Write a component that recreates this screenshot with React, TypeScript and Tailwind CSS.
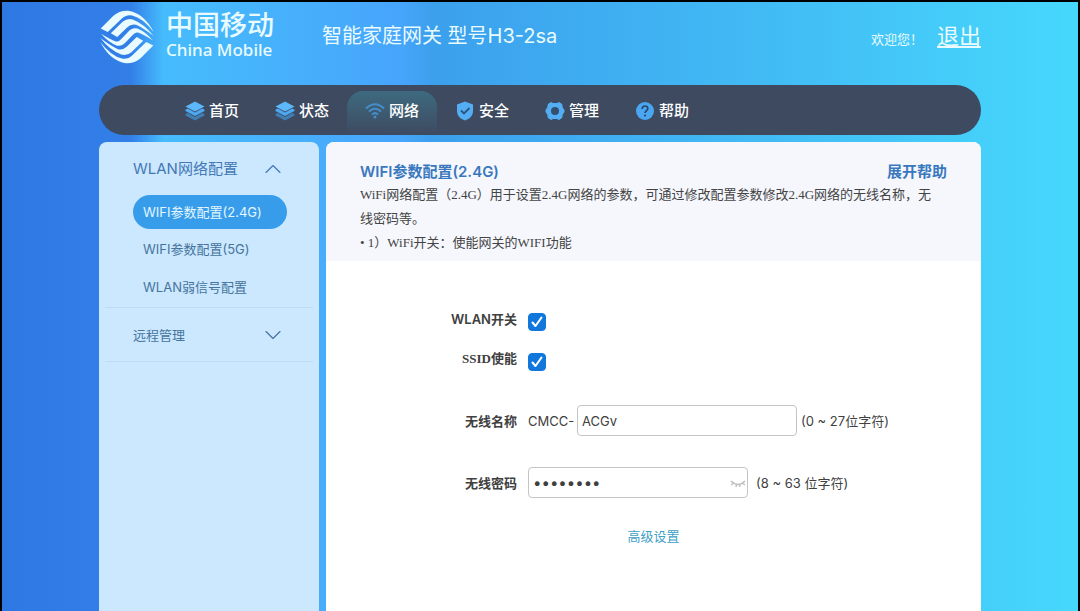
import { useState } from "react";
import { ChevronDown, ChevronUp } from "lucide-react";

const sans = "font-['Inter','Noto_Sans_CJK_SC',sans-serif]";
const serif = "font-['Liberation_Serif','Noto_Sans_CJK_SC',serif]";

function LogoWaves() {
  return (
    <>
      <path d="M17 66 54 29Q72 12 98 13 145 20 174 76 142 34 110 27 92 24 79 37L38 76Z" />
      <path d="M47 80 82 46Q96 34 112 39 146 52 174 88 142 64 122 55 108 51 96 62L66 91Z" />
    </>
  );
}

function Logo() {
  return (
    <svg viewBox="14 11 162 160" className="h-[54px] w-14 shrink-0" fill="#e9fbff" aria-hidden="true">
      <LogoWaves />
      <path d="M18 81Q46 98 62 104 69 106 75 100L98 76Q110 62 126 66 150 76 172 101 144 84 128 78 121 76 115 82L92 106Q80 120 64 116 40 106 18 81Z" />
      <g transform="rotate(180 95 91)">
        <LogoWaves />
      </g>
    </svg>
  );
}

function LayersIcon() {
  return (
    <svg viewBox="0 0 20 20" className="size-5" aria-hidden="true">
      <path d="M10 0.500 19.500 5.500 10 10.500 0.500 5.500Z" fill="#5cb8fa" />
      <path d="M0.500 8.500 3 7.500 10 11.500 17 7.500 19.500 8.500V10L10 15 0.500 10Z" fill="#4ea8f0" />
      <path d="M0.500 13 3 12 10 16 17 12 19.500 13V14.500L10 19.500 0.500 14.500Z" fill="#3f7db5" />
    </svg>
  );
}

function WifiIcon() {
  return (
    <svg viewBox="0 0 20 20" className="size-5" fill="none" stroke="#438fce" strokeWidth="2" aria-hidden="true">
      <path d="M1 7.500Q10-1 19 7.500" />
      <path d="M4 10.500Q10 5 16 10.500" />
      <path d="M7 13.500Q10 10.800 13 13.500" />
      <circle cx="10" cy="16" r="1.500" fill="#438fce" stroke="none" />
    </svg>
  );
}

function ShieldIcon() {
  return (
    <svg viewBox="0 0 20 20" className="size-5" aria-hidden="true">
      <path d="M10 0.500 18 3.500V10C18 15 14.500 18 10 19.500 5.500 18 2 15 2 10V3.500Z" fill="#54aef4" />
      <path d="m6 9.500 3 3 5.500-5.500" fill="none" stroke="#2c557f" strokeWidth="1.8" />
    </svg>
  );
}

function GearIcon() {
  return (
    <svg viewBox="0 0 20 20" className="size-5" aria-hidden="true">
      <path
        d="M6 1.500 8 2.500H12L14 1.500 17 3.500V6L19 9V11L17 14V16.500L14 18.500 12 17.500H8L6 18.500 3 16.500V14L1 11V9L3 6V3.500Z"
        fill="#54aef4"
        stroke="#54aef4"
        strokeLinejoin="round"
      />
      <circle cx="10" cy="10" r="4" fill="#34506f" />
    </svg>
  );
}

function HelpIcon() {
  return (
    <svg viewBox="0 0 20 20" className="size-5" aria-hidden="true">
      <circle cx="10" cy="10" r="9" fill="#4ba6f2" />
      <path d="M7.200 8Q7.200 5 10 5T12.800 7.600Q12.800 9 11.200 9.900 10 10.600 10 12" fill="none" stroke="#28486c" strokeWidth="1.700" />
      <circle cx="10" cy="14.500" r="1.100" fill="#28486c" />
    </svg>
  );
}

const tabs = [
  { label: "首页", icon: LayersIcon },
  { label: "状态", icon: LayersIcon },
  { label: "网络", icon: WifiIcon },
  { label: "安全", icon: ShieldIcon },
  { label: "管理", icon: GearIcon },
  { label: "帮助", icon: HelpIcon },
];

const wlanPages = ["WIFI参数配置(2.4G)", "WIFI参数配置(5G)", "WLAN弱信号配置"];

function Checkbox({ id }: { id: string }) {
  return (
    <span className="mt-1.5 grid size-[18px]">
      <input
        id={id}
        type="checkbox"
        defaultChecked
        className="peer col-start-1 row-start-1 size-[18px] appearance-none rounded border border-[#b5b5b5] bg-white checked:border-[#1277dc] checked:bg-[#1277dc]"
      />
      <svg viewBox="0 0 18 18" className="pointer-events-none invisible col-start-1 row-start-1 size-[18px] peer-checked:visible" aria-hidden="true">
        <path d="m4.500 9.500 3 3.500 6-8.500" fill="none" stroke="#fff" strokeWidth="2" strokeLinecap="round" strokeLinejoin="round" />
      </svg>
    </span>
  );
}

function Sidebar({ page, onSelect }: { page: string; onSelect: (p: string) => void }) {
  return (
    <aside className="w-[220px] shrink-0 rounded-t-lg bg-[#cbe8ff] px-1.5 text-[#46749c]">
      <div className="border-b border-[#bedcf4]">
        <button className="flex h-[53px] w-full items-center justify-between pr-[26px] pl-7 text-[15px] text-[#4478b4]">
          WLAN网络配置
          <ChevronUp className="size-7" strokeWidth={1} />
        </button>
        <ul className="px-7 pb-0.5 text-[13px]">
          {wlanPages.map((p) => (
            <li key={p} className="mb-0.5 last:mb-0">
              <button
                onClick={() => onSelect(p)}
                className={
                  p === page
                    ? "h-[34px] w-[154px] rounded-full bg-[#379deb] pl-2.5 text-left text-[#e4f6ff]"
                    : "h-9 w-[154px] pl-2.5 text-left"
                }
              >
                {p}
              </button>
            </li>
          ))}
        </ul>
      </div>
      <button className="flex h-[54px] w-full items-center justify-between border-b border-[#bedcf4] pr-[26px] pl-7 text-[13px]">
        远程管理
        <ChevronDown className="size-7" strokeWidth={1} />
      </button>
    </aside>
  );
}

function WifiForm() {
  const [shown, setShown] = useState(false);
  const row = "grid grid-cols-[191px_1fr] items-center gap-[11px]";
  const label = "text-right font-semibold";
  const field = "h-[31px] w-[220px] rounded border border-[#c4c4c4] bg-white px-1 outline-none";

  return (
    <form className="pt-[38px] text-[13px] text-[#404040]">
      <div className={`${row} h-10`}>
        <label htmlFor="wlan" className={label}>WLAN开关</label>
        <Checkbox id="wlan" />
      </div>
      <div className={`${row} h-10`}>
        <label htmlFor="ssid-on" className={`text-right font-bold ${serif}`}>SSID使能</label>
        <Checkbox id="ssid-on" />
      </div>
      <div className={`${row} mt-[26px]`}>
        <label htmlFor="name" className={label}>无线名称</label>
        <div className="flex items-center">
          <span className="w-[49px]">CMCC-</span>
          <input id="name" defaultValue="ACGv" className={`${field} text-[13px]`} />
          <span className="ml-1">(0 ~ 27位字符)</span>
        </div>
      </div>
      <div className={`${row} mt-[31px]`}>
        <label htmlFor="password" className={label}>无线密码</label>
        <div className="flex items-center">
          <div className="relative">
            <input id="password" type={shown ? "text" : "password"} defaultValue="12345678" className={`${field} text-[15px]`} />
            <button
              type="button"
              aria-label="显示密码"
              onClick={() => setShown(!shown)}
              className="absolute inset-y-0 right-0.5 flex items-center text-[#c0c0c0]"
            >
              <svg viewBox="0 0 16 10" className="h-2.5 w-4" fill="none" stroke="currentColor" strokeWidth="1.500" aria-hidden="true">
                <path d="M1 3Q8 10 15 3M4 5 1 7M6.500 6 6 9M9.500 6 10 9M12 5 15 7" />
              </svg>
            </button>
          </div>
          <span className="ml-2">(8 ~ 63 位字符)</span>
        </div>
      </div>
      <div className="mt-7 text-center">
        <a href="#advanced" className="text-[#3f9fc6]">高级设置</a>
      </div>
    </form>
  );
}

export default function App() {
  const [tab, setTab] = useState("网络");
  const [page, setPage] = useState(wlanPages[0]);

  return (
    <div
      className={`flex min-h-screen flex-col border-x-2 border-t-2 border-black bg-[linear-gradient(90deg,#2e78e4_0%,#337fe8_12%,#46bcfc_15%,#47a5fb_37%,#3ca0ed_40%,#42bcf5_72%,#46d8fc_100%)] px-4 leading-5 ${sans}`}
    >
      <div className="mx-auto flex w-full max-w-[882px] flex-1 flex-col">
        <header className="flex h-[83px] items-start pt-2 text-[#e9fbff]">
          <Logo />
          <div className="ml-[11px] font-['Noto_Sans','Noto_Sans_CJK_SC',sans-serif] font-medium">
            <div className="text-[27px] leading-[30px]">中国移动</div>
            <div className="text-[17px] leading-5">China Mobile</div>
          </div>
          <h1 className="ml-12 pt-3 text-[20px] leading-7">智能家庭网关 型号H3-2sa</h1>
          <div className="ml-auto flex items-baseline gap-3.5 pt-2.5">
            <span className="text-[13px]">欢迎您！</span>
            <a href="#logout" className="text-[22px] leading-8 underline">退出</a>
          </div>
        </header>

        <nav className="flex h-[50px] items-end rounded-full bg-[#3d4a60] px-[68px]">
          {tabs.map(({ label, icon: Icon }) => (
            <button
              key={label}
              onClick={() => setTab(label)}
              className={`flex h-[44px] w-[90px] items-center justify-center gap-1 rounded-t-2xl pb-1 text-[15px] font-medium text-white ${
                tab === label ? "bg-linear-to-b from-[#3d6a80] to-[#3d4a60]" : ""
              }`}
            >
              <Icon />
              {label}
            </button>
          ))}
        </nav>

        <div className="mt-[7px] flex flex-1 gap-[7px]">
          <Sidebar page={page} onSelect={setPage} />
          <main className="min-w-0 flex-1 overflow-hidden rounded-t-lg bg-white">
            <section className="bg-[#f5f7fd] px-[34px] pt-5 pb-1.5">
              <div className="flex justify-between text-[15px] font-semibold text-[#3a78bd]">
                <h2>{page}</h2>
                <a href="#help">展开帮助</a>
              </div>
              <div className={`pt-px pr-2 text-[13px] leading-6 text-[#444] ${serif}`}>
                <p>WiFi网络配置（2.4G）用于设置2.4G网络的参数，可通过修改配置参数修改2.4G网络的无线名称，无线密码等。</p>
                <p>• 1）WiFi开关：使能网关的WIFI功能</p>
              </div>
            </section>
            <WifiForm />
          </main>
        </div>
      </div>
    </div>
  );
}
